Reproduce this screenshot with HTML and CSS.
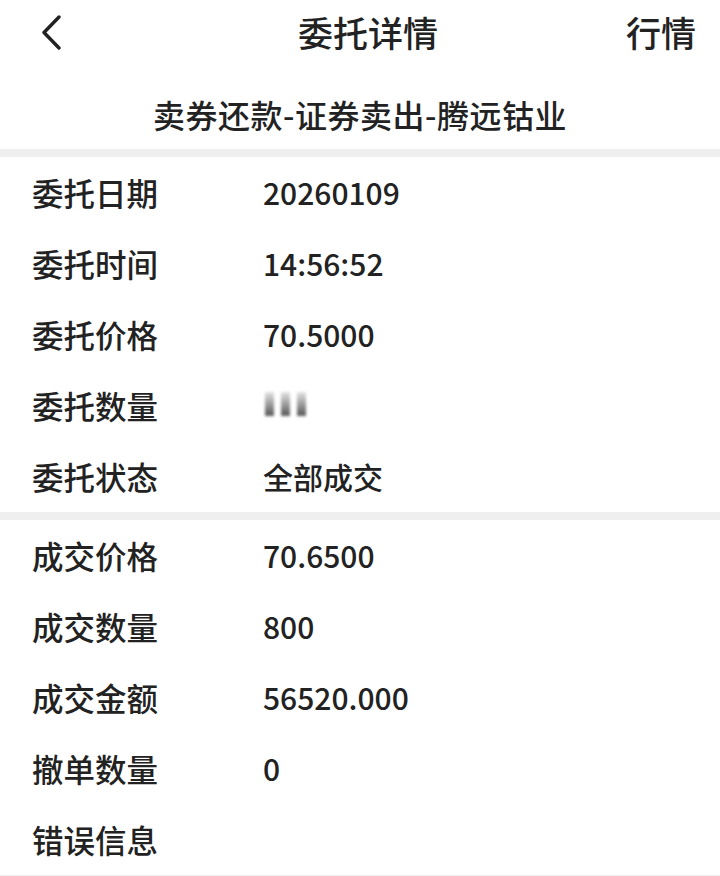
FILE: index.html
```html
<!DOCTYPE html>
<html>

<head>
    <meta charset="utf-8">
    <title>委托详情</title>
    <link rel="stylesheet" href="styles.css">
</head>

<body>
    <div class="nav-bar">
        <div class="back-btn">
            <svg width="24" height="36" viewBox="0 0 24 36">
                <polyline points="19,3 4,18.5 19,34" fill="none" stroke="#222" stroke-width="3.4"
                    stroke-linecap="round" stroke-linejoin="round" />
            </svg>
        </div>
        <div class="nav-title">委托详情</div>
        <div class="nav-action">行情</div>
    </div>

    <div class="sub-title">卖券还款-证券卖出-腾远钴业</div>

    <div class="divider"></div>

    <div class="section">
        <div class="row">
            <span class="label">委托日期</span>
            <span class="value">20260109</span>
        </div>
        <div class="row">
            <span class="label">委托时间</span>
            <span class="value">14:56:52</span>
        </div>
        <div class="row">
            <span class="label">委托价格</span>
            <span class="value">70.5000</span>
        </div>
        <div class="row">
            <span class="label">委托数量</span>
            <span class="value masked">
                <i></i><i></i><i></i>
            </span>
        </div>
        <div class="row">
            <span class="label">委托状态</span>
            <span class="value">全部成交</span>
        </div>
    </div>

    <div class="divider"></div>

    <div class="section">
        <div class="row">
            <span class="label">成交价格</span>
            <span class="value">70.6500</span>
        </div>
        <div class="row">
            <span class="label">成交数量</span>
            <span class="value">800</span>
        </div>
        <div class="row">
            <span class="label">成交金额</span>
            <span class="value">56520.000</span>
        </div>
        <div class="row">
            <span class="label">撤单数量</span>
            <span class="value">0</span>
        </div>
        <div class="row">
            <span class="label">错误信息</span>
            <span class="value"></span>
        </div>
    </div>

    <div class="divider"></div>
</body>

</html>
```

FILE: styles.css
```css
body {
    margin: 0;
    background-color: #fff;
    font-family: "Noto Sans CJK SC", "Noto Sans", sans-serif;
    font-weight: 500;
    color: #222;
}

.nav-bar {
    display: grid;
    grid-template-columns: 1fr auto 1fr;
    align-items: center;
    height: 64px;
    padding: 0 24px 0 40px;
}

.back-btn {
    display: flex;
    align-items: center;
    height: 36px;
}

.nav-title {
    font-size: 35px;
    line-height: 44px;
}

.nav-action {
    justify-self: end;
    font-size: 35px;
    line-height: 44px;
}

.sub-title {
    text-align: center;
    font-size: 32px;
    letter-spacing: 0.5px;
    line-height: 40px;
    padding: 30px 0 15px;
}

.divider {
    height: 8px;
    background-color: #efefef;
}

.section {
    display: flex;
    flex-direction: column;
}

.row {
    display: flex;
    align-items: center;
    height: 71px;
    padding-left: 32px;
    font-size: 31.5px;
    line-height: 71px;
}

.label {
    width: 231px;
    flex-shrink: 0;
}

.value {
    font-size: 30px;
}

/* blurred quantity */
.masked {
    display: flex;
    gap: 7px;
    padding-left: 2px;
    margin-top: -4px;
}

.masked i {
    display: block;
    width: 9px;
    height: 24px;
    background: linear-gradient(#e4e4e4, #555);
    filter: blur(1.5px);
}
```
